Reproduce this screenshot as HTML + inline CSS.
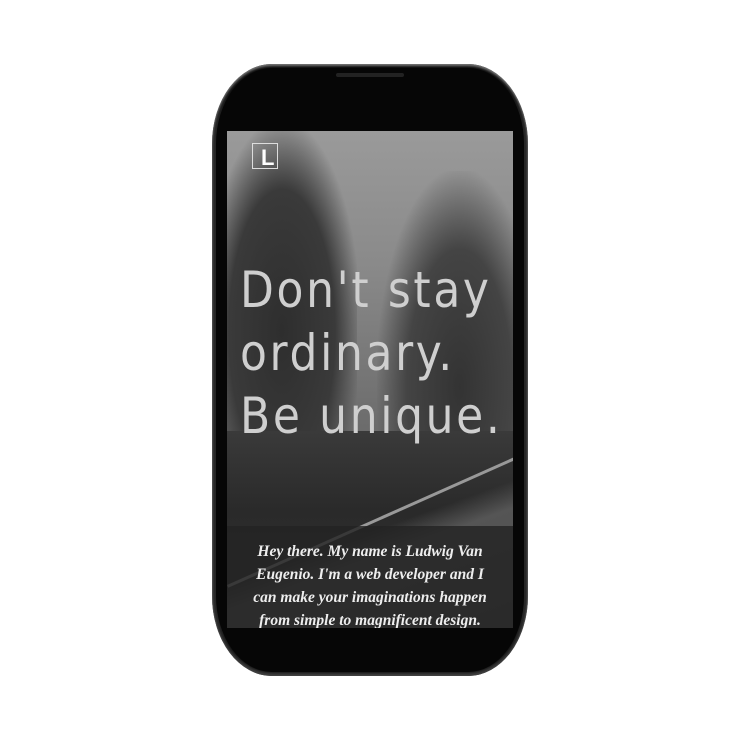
<!DOCTYPE html>
<html><head><style>
html,body{margin:0;padding:0;background:#fff;width:740px;height:740px;overflow:hidden}
.phone{position:absolute;left:212px;top:64px;width:316px;height:612px;border-radius:60px/80px;background:linear-gradient(90deg,#2a2a2a,#111 6%,#050505 50%,#111 94%,#2a2a2a);box-shadow:inset 0 2px 2px #777,inset 0 -3px 3px #444}
.phone:before{content:"";position:absolute;left:4px;top:4px;right:4px;bottom:4px;border-radius:56px/76px;background:#060606}
.spk{position:absolute;left:336px;top:73px;width:68px;height:4px;background:#222;border-radius:2px}
.screen{position:absolute;left:227px;top:131px;width:286px;height:497px;overflow:hidden;background:#555}
.sky{position:absolute;left:0;top:0;width:286px;height:330px;background:linear-gradient(180deg,#9a9a9a 0,#8a8a8a 40%,#666 100%)}
.trees1{position:absolute;left:-20px;top:0;width:150px;height:400px;background:radial-gradient(ellipse at 50% 50%,#2e2e2e 0,#3a3a3a 50%,rgba(60,60,60,0) 75%)}
.trees2{position:absolute;left:150px;top:40px;width:150px;height:360px;background:radial-gradient(ellipse at 55% 60%,#333 0,#444 45%,rgba(70,70,70,0) 72%)}
.ground{position:absolute;left:0;top:300px;width:286px;height:200px;background:linear-gradient(180deg,#3a3a3a,#2a2a2a 40%,#333 100%)}
.road{position:absolute;left:0;top:330px;width:286px;height:170px;background:linear-gradient(160deg,transparent 45%,#555 55%,#4a4a4a 100%)}
.line{position:absolute;left:0;top:454px;width:320px;height:3px;background:#999;transform:rotate(-24deg);transform-origin:0 0}
.logo{position:absolute;left:25px;top:12px;width:26px;height:26px;border:1px solid #ddd;box-sizing:border-box}
.logo span{position:absolute;left:8px;top:3px;font:bold 22px/22px "Liberation Sans",sans-serif;color:#fff}
h1{position:absolute;left:13px;top:128px;margin:0;font:400 50px/63px "DejaVu Sans","Liberation Sans",sans-serif;letter-spacing:3px;color:#cfcfcf;white-space:nowrap;transform:scaleX(0.88);transform-origin:0 0}
.band{position:absolute;left:0;top:395px;width:286px;height:102px;background:rgba(35,35,35,.82)}
.band p{margin:0;padding-top:14px;text-align:center;font:italic bold 15.5px/23px "Liberation Serif",serif;color:#eee;white-space:nowrap}
</style></head><body>
<div class="phone"></div>
<div class="spk"></div>
<div class="screen">
<div class="sky"></div><div class="trees1"></div><div class="trees2"></div>
<div class="ground"></div><div class="road"></div><div class="line"></div>
<div class="logo"><span>L</span></div>
<h1>Don't stay<br>ordinary.<br>Be unique.</h1>
<div class="band"><p>Hey there. My name is Ludwig Van<br>Eugenio. I'm a web developer and I<br>can make your imaginations happen<br>from simple to magnificent design.</p></div>
</div>
</body></html>
